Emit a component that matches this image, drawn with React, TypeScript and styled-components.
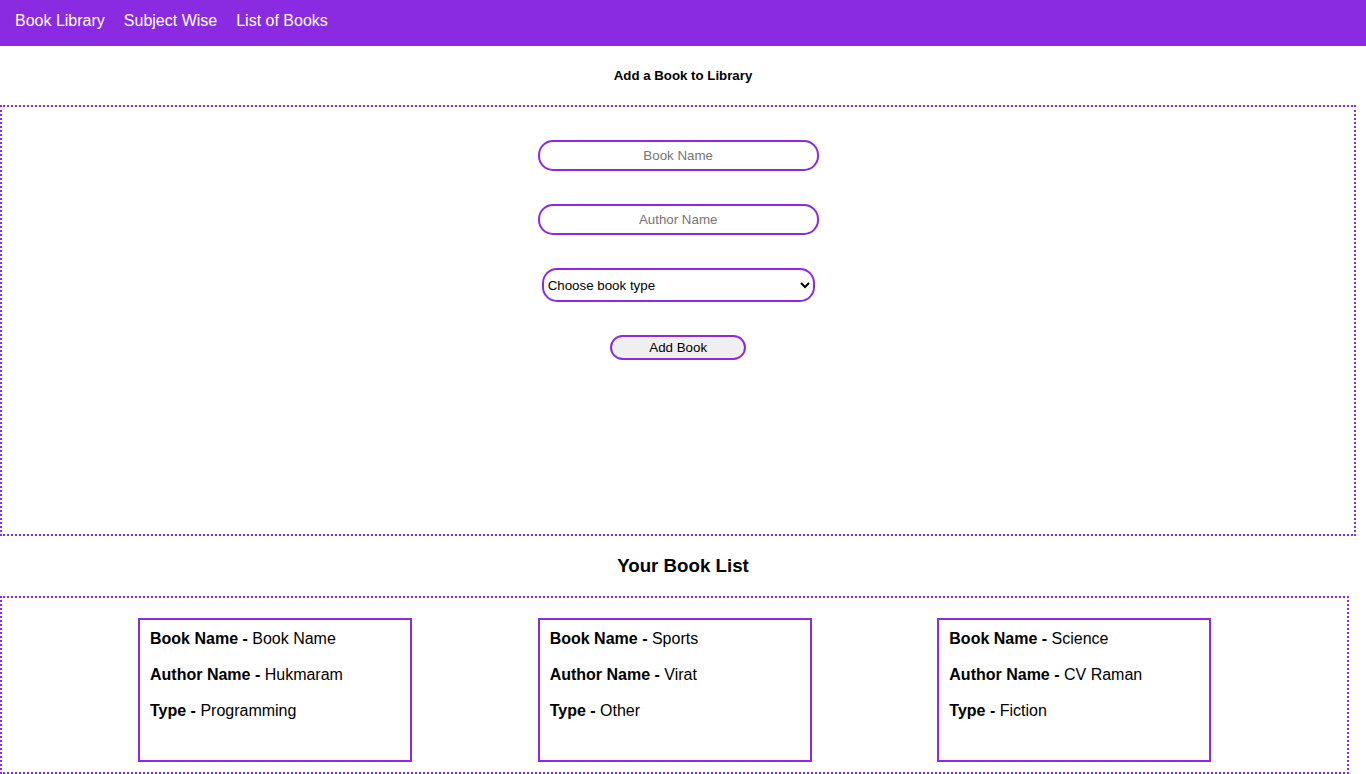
import React, { useState } from 'react';
import styled, { createGlobalStyle } from 'styled-components';

const accent = '#8a2be2';
const fontStack = '"Liberation Sans", Arial, Helvetica, sans-serif';

const GlobalStyle = createGlobalStyle`
  *, *::before, *::after { box-sizing: border-box; }
  body {
    margin: 0;
    background: #fff;
    color: #000;
    font-family: ${fontStack};
  }
  input, select, button { font-family: ${fontStack}; }
`;

const NavBar = styled.nav`
  display: flex;
  gap: 19px;
  height: 46px;
  padding: 12px 15px;
  background: ${accent};
`;

const NavLink = styled.a`
  color: #fff;
  font-size: 16px;
  line-height: 18px;
  text-decoration: none;
  white-space: nowrap;
`;

const FormTitle = styled.h5`
  margin: 22px 0;
  line-height: 15px;
  text-align: center;
`;

const ListTitle = styled.h3`
  margin: 19px 0;
  line-height: 22px;
  text-align: center;
`;

const BookForm = styled.form`
  display: flex;
  flex-direction: column;
  align-items: center;
  gap: 33px;
  width: calc(99% + 4px);
  min-height: 431px;
  padding: 33px 0;
  border: 2px dotted ${accent};
`;

const TextField = styled.input`
  width: 281px;
  height: 31px;
  padding: 1px 2px;
  border: 2px solid ${accent};
  border-radius: 15px;
  background: #fff;
  text-align: center;
`;

const TypeSelect = styled.select`
  width: 273px;
  height: 34px;
  border: 2px solid ${accent};
  border-radius: 15px;
  background-color: #fff;
  color: #000;
`;

const SubmitButton = styled.button`
  width: 136px;
  height: 25px;
  padding: 1px 6px;
  border: 2px solid ${accent};
  border-radius: 15px;
  background: #efefef;
  color: #000;
`;

const BookList = styled.section`
  display: flex;
  flex-wrap: wrap;
  justify-content: space-between;
  gap: 20px;
  width: calc(99% - 3px);
  padding: 20px 136px 10px;
  border: 2px dotted ${accent};
`;

const BookCard = styled.article`
  display: flex;
  flex-direction: column;
  gap: 18px;
  width: 274px;
  min-height: 144px;
  padding: 10px;
  border: 2px solid ${accent};
`;

const BookLine = styled.p`
  margin: 0;
  font-size: 16px;
  line-height: 18px;
`;

interface Book {
  name: string;
  author: string;
  type: string;
}

const initialBooks: Book[] = [
  { name: 'Book Name', author: 'Hukmaram', type: 'Programming' },
  { name: 'Sports', author: 'Virat', type: 'Other' },
  { name: 'Science', author: 'CV Raman', type: 'Fiction' },
];

const bookTypes = ['Programming', 'Fiction', 'Other'];

export default function App() {
  const [books, setBooks] = useState(initialBooks);
  const [name, setName] = useState('');
  const [author, setAuthor] = useState('');
  const [type, setType] = useState('');

  const addBook = (event: React.FormEvent) => {
    event.preventDefault();
    if (!name || !author || !type) return;
    setBooks([...books, { name, author, type }]);
    setName('');
    setAuthor('');
    setType('');
  };

  return (
    <>
      <GlobalStyle />
      <NavBar>
        <NavLink href="#library">Book Library</NavLink>
        <NavLink href="#subjects">Subject Wise</NavLink>
        <NavLink href="#books">List of Books</NavLink>
      </NavBar>
      <main>
        <FormTitle>Add a Book to Library</FormTitle>
        <BookForm id="library" onSubmit={addBook}>
          <TextField
            type="text"
            aria-label="Book Name"
            placeholder="Book Name"
            value={name}
            onChange={(e) => setName(e.target.value)}
          />
          <TextField
            type="text"
            aria-label="Author Name"
            placeholder="Author Name"
            value={author}
            onChange={(e) => setAuthor(e.target.value)}
          />
          <TypeSelect aria-label="Book type" value={type} onChange={(e) => setType(e.target.value)}>
            <option value="">Choose book type</option>
            {bookTypes.map((t) => (
              <option key={t} value={t}>{t}</option>
            ))}
          </TypeSelect>
          <SubmitButton type="submit">Add Book</SubmitButton>
        </BookForm>
        <ListTitle>Your Book List</ListTitle>
        <BookList id="books">
          {books.map((book, i) => (
            <BookCard key={i}>
              <BookLine><b>Book Name - </b>{book.name}</BookLine>
              <BookLine><b>Author Name - </b>{book.author}</BookLine>
              <BookLine><b>Type - </b>{book.type}</BookLine>
            </BookCard>
          ))}
        </BookList>
      </main>
    </>
  );
}
